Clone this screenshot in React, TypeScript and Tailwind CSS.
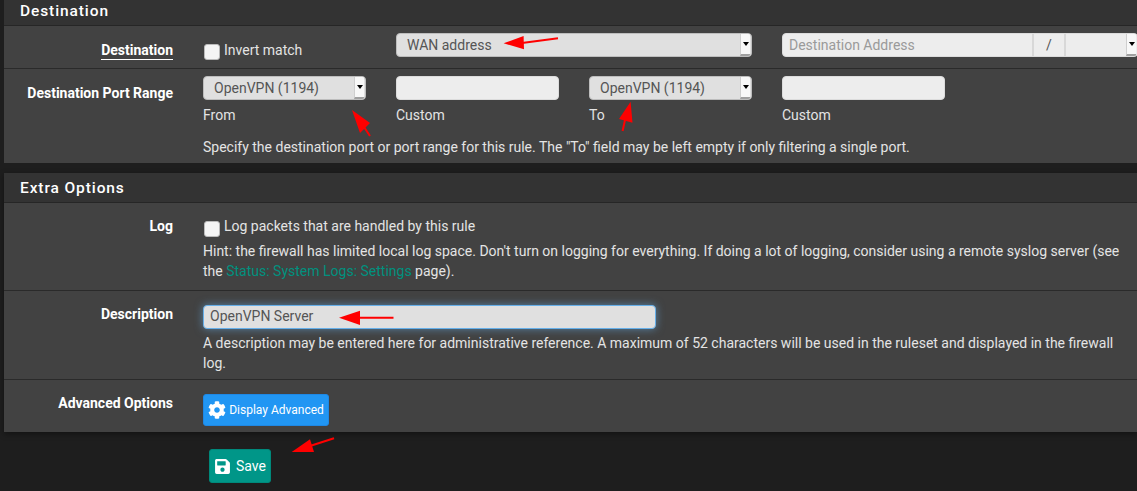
import type { ReactNode } from 'react';
import { FaCog, FaSave } from 'react-icons/fa';

function Spinner() {
  return (
    <div className="absolute right-[1px] top-0 bottom-0 w-[10px] bg-[#f8f8f8] border-l border-b-2 border-l-[#cfcfcf] border-b-[#a0a0a0] flex items-center justify-center">
      <div className="w-0 h-0 border-l-[3px] border-r-[3px] border-t-[4px] border-l-transparent border-r-transparent border-t-black" />
    </div>
  );
}

function SelectBox({ value, className }: { value?: string; className: string }) {
  return (
    <div className={`relative h-6 bg-[#e0e0e0] border border-[#bdbdbd] rounded-[4px] text-[#555] flex items-center overflow-hidden ${className}`}>
      <span className="leading-none">{value}</span>
      <Spinner />
    </div>
  );
}

function TextBox({ className, children }: { className?: string; children?: ReactNode }) {
  return (
    <div className={`h-6 bg-[#ededed] border border-[#dcdcdc] rounded-[4px] ${className ?? ''}`}>{children}</div>
  );
}

function Checkbox({ className }: { className: string }) {
  return <div className={`w-4 h-4 ml-[1px] shrink-0 bg-[#f5f5f5] border border-[#bbb] rounded-[3px] ${className}`} />;
}

function Row({ label, labelClass, className, children }: { label: string; labelClass?: string; className: string; children: ReactNode }) {
  return (
    <div className={`flex border-b border-[#2a2a2a] last:border-b-0 ${className}`}>
      <div className="w-[169px] shrink-0 text-right font-bold">
        <span className={labelClass}>{label}</span>
      </div>
      <div className="ml-[30px] flex-1 min-w-0">{children}</div>
    </div>
  );
}

function PanelHeading({ title, className }: { title: string; className: string }) {
  return (
    <div className={`bg-[#333333] border-b border-[#262626] pl-4 flex items-center text-[15.5px] font-medium tracking-[0.9px] text-white ${className}`}>
      {title}
    </div>
  );
}

// red arrows drawn over the screenshot; each svg is placed on the page
function Arrow({ className, width, height, shaft, head }: { className: string; width: number; height: number; shaft: string; head: string }) {
  return (
    <svg className={`absolute ${className}`} width={width} height={height} viewBox={`0 0 ${width} ${height}`}>
      <path d={shaft} stroke="#ff0000" strokeWidth="2" fill="none" />
      <polygon points={head} fill="#ff0000" />
    </svg>
  );
}

export default function App() {
  return (
    <div className="relative w-[1137px] h-[491px] overflow-hidden bg-[#1e1e1e] font-['Roboto',sans-serif] text-[14px] leading-[20px] text-[#e4e4e4]">
      <div className="ml-1 bg-[#424242]">
        <PanelHeading title="Destination" className="h-[26px] pb-[3px]" />
        <Row label="Destination" labelClass="text-white border-b border-white pb-[1px]" className="h-[43px] pt-[14px] text-white">
          <div className="grid grid-cols-[163px_163px_163px_356px] gap-x-[30px] -mt-[7px]">
            <div className="flex items-start gap-[4px] pt-[7px] text-[#e4e4e4]">
              <Checkbox className="mt-[4px]" />
              <span>Invert match</span>
            </div>
            <SelectBox value="WAN address" className="col-span-2 pl-[10px]" />
            <TextBox className="relative flex items-center text-[#9a9a9a] overflow-hidden">
              <span className="pl-[6px] w-[251px] shrink-0 h-full flex items-center border-r-2 border-[#d8d8d8]">Destination Address</span>
              <span className="w-[32px] shrink-0 h-full flex items-center justify-center border-r-2 border-[#d8d8d8] text-[#555]">/</span>
              <Spinner />
            </TextBox>
          </div>
        </Row>
        <Row label="Destination Port Range" className="h-[94px] pt-[14px] text-white">
          <div className="text-[#e4e4e4] -mt-[7px]">
            <div className="grid grid-cols-[163px_163px_163px_163px] gap-x-[30px]">
              <SelectBox value="OpenVPN (1194)" className="pl-[10px]" />
              <TextBox />
              <SelectBox value="OpenVPN (1194)" className="pl-[10px]" />
              <TextBox />
            </div>
            <div className="grid grid-cols-[163px_163px_163px_163px] gap-x-[30px] mt-[5px]">
              <span>From</span>
              <span>Custom</span>
              <span>To</span>
              <span>Custom</span>
            </div>
            <p className="mt-[12px]">Specify the destination port or port range for this rule. The "To" field may be left empty if only filtering a single port.</p>
          </div>
        </Row>
      </div>

      <div className="ml-1 mt-[10px] bg-[#424242] shadow-[0_2px_6px_rgba(0,0,0,0.4)]">
        <PanelHeading title="Extra Options" className="h-[30px]" />
        <Row label="Log" className="h-[88px] pt-[13px] text-white">
          <div className="text-[#e4e4e4] pr-3">
            <div className="flex items-start gap-[4px]">
              <Checkbox className="mt-[5px]" />
              <span>Log packets that are handled by this rule</span>
            </div>
            <p className="mt-[4px]">
              Hint: the firewall has limited local log space. Don't turn on logging for everything. If doing a lot of logging, consider using a remote syslog server (see the{' '}
              <span className="text-[#00917f]">Status: System Logs: Settings</span> page).
            </p>
          </div>
        </Row>
        <Row label="Description" className="h-[89px] pt-[13px] text-white">
          <div className="text-[#e4e4e4] pr-3">
            <div className="w-[453px] h-6 mt-[1px] pl-[6px] pb-[2px] flex items-center bg-[#e0e0e0] text-[#555] border border-[#66afe9] rounded-[4px] shadow-[0_0_8px_rgba(102,175,233,0.6)]">
              OpenVPN Server
            </div>
            <p className="mt-[4px]">A description may be entered here for administrative reference. A maximum of 52 characters will be used in the ruleset and displayed in the firewall log.</p>
          </div>
        </Row>
        <Row label="Advanced Options" className="h-[52px] pt-[13px] text-white">
          <button className="mt-[1px] h-8 w-[126px] flex items-center justify-center gap-[3px] bg-[#2196f3] border border-[#1e88e5] rounded-[3px] text-[12px] text-white">
            <FaCog size={18} />
            <span>Display Advanced</span>
          </button>
        </Row>
      </div>

      <button className="ml-[209px] mt-[17px] h-[34px] w-[62px] flex items-center justify-center gap-[5px] bg-[#009688] border border-[#00897b] rounded-[3px] text-white">
        <FaSave size={17} />
        <span>Save</span>
      </button>

      <Arrow className="left-[500px] top-[34px]" width={60} height={18} shaft="M22 9 L58 4.3" head="3.6,9.3 23.6,2 24,15.3" />
      <Arrow className="left-[350px] top-[108px]" width={26} height={30} shaft="M14 19 L20 28" head="2,2 20,15 10,25" />
      <Arrow className="left-[615px] top-[98px]" width={22} height={36} shaft="M10 22 L7.6 33" head="15.6,3.7 4,21 17.5,24.7" />
      <Arrow className="left-[336px] top-[308px]" width={60} height={20} shaft="M22 9.7 L57.5 9.7" head="3,9.7 24,2.7 24,17" />
      <Arrow className="left-[290px] top-[436px]" width={46} height={20} shaft="M20 10 L44 2.3" head="1.7,16 20,3.3 24,16" />
    </div>
  );
}
